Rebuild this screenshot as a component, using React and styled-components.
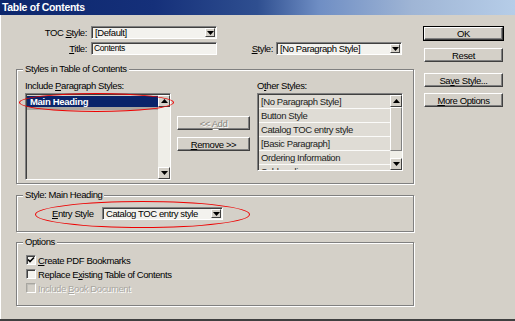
import React from "react";
import styled, { createGlobalStyle } from "styled-components";

const FONT = `"Liberation Sans", Arial, sans-serif`;

const GlobalStyle = createGlobalStyle`
  body {
    margin: 0;
    background: #d4d0c8;
  }
`;

const otherStyles = [
  "[No Paragraph Style]",
  "Button Style",
  "Catalog TOC entry style",
  "[Basic Paragraph]",
  "Ordering Information",
  "Subheading",
];

const Arrow = ({ up }) => (
  <svg width="7" height="4" viewBox="0 0 7 4">
    <path d={up ? "M0 4 L3.5 0 L7 4 Z" : "M0 0 L7 0 L3.5 4 Z"} fill="#000" />
  </svg>
);

const App = () => {
  return (
    <>
      <GlobalStyle />
      <Window>
        <TitleBar>Table of Contents</TitleBar>
        <Content>
          <MainCol>
            <FieldRow>
              <FieldLabel $w={75}>
                TOC <Key>S</Key>tyle:
              </FieldLabel>
              <Select $w={126}>
                <span>[Default]</span>
                <DropBtn>
                  <Arrow />
                </DropBtn>
              </Select>
            </FieldRow>
            <FieldRow $mt={3}>
              <FieldLabel $w={75}>
                <Key>T</Key>itle:
              </FieldLabel>
              <TextInput $w={126}>Contents</TextInput>
              <FieldLabel $w={27} $ml={32} $pr={3}>
                <Key>S</Key>tyle:
              </FieldLabel>
              <Select $w={126}>
                <span>[No Paragraph Style]</span>
                <DropBtn>
                  <Arrow />
                </DropBtn>
              </Select>
            </FieldRow>

            <Group $mt={14} $h={115}>
              <Legend>Styles in Table of Contents</Legend>
              <Ellipse $l={2} $t={23} $w={155} $h={19} />
              <GroupRow>
                <ListCol>
                  <ColLabel>
                    Include <Key>P</Key>aragraph Styles:
                  </ColLabel>
                  <ListBox $h={87}>
                    <ListItems>
                      <SelectedItem>Main Heading</SelectedItem>
                    </ListItems>
                    <ScrollBar>
                      <ScrollBtn>
                        <Arrow up />
                      </ScrollBtn>
                      <ScrollTrack />
                      <ScrollBtn>
                        <Arrow />
                      </ScrollBtn>
                    </ScrollBar>
                  </ListBox>
                </ListCol>
                <MidCol>
                  <Button $h={14} disabled>
                    &lt;&lt; <Key>A</Key>dd
                  </Button>
                  <Button $h={14} $mt={7}>
                    <Key>R</Key>emove &gt;&gt;
                  </Button>
                </MidCol>
                <ListCol $ml={7}>
                  <ColLabel>
                    O<Key>t</Key>her Styles:
                  </ColLabel>
                  <ListBox $h={78}>
                    <ListItems>
                      {otherStyles.map((s) => (
                        <ListItem key={s}>{s}</ListItem>
                      ))}
                    </ListItems>
                    <ScrollBar>
                      <ScrollBtn>
                        <Arrow up />
                      </ScrollBtn>
                      <ScrollThumb />
                      <ScrollTrack />
                      <ScrollBtn>
                        <Arrow />
                      </ScrollBtn>
                    </ScrollBar>
                  </ListBox>
                </ListCol>
              </GroupRow>
            </Group>

            <Group $mt={11} $h={37}>
              <Legend>Style: Main Heading</Legend>
              <Ellipse $l={18} $t={5} $w={215} $h={27} />
              <EntryRow>
                <EntryLabel>
                  <Key>E</Key>ntry Style
                </EntryLabel>
                <Select $w={121}>
                  <span>Catalog TOC entry style</span>
                  <DropBtn>
                    <Arrow />
                  </DropBtn>
                </Select>
              </EntryRow>
            </Group>

            <Group $mt={10} $h={64}>
              <Legend>Options</Legend>
              <Checks>
                <CheckRow>
                  <CheckBox>
                    <svg width="8" height="8" viewBox="0 0 8 8">
                      <path d="M1 3.5 L3 5.5 L7 1.5" stroke="#000" strokeWidth="1.6" fill="none" />
                    </svg>
                  </CheckBox>
                  <span>
                    <Key>C</Key>reate PDF Bookmarks
                  </span>
                </CheckRow>
                <CheckRow>
                  <CheckBox />
                  <span>
                    Replace E<Key>x</Key>isting Table of Contents
                  </span>
                </CheckRow>
                <CheckRow $disabled>
                  <CheckBox $disabled />
                  <span>
                    Include <Key>B</Key>ook Document
                  </span>
                </CheckRow>
              </Checks>
            </Group>
          </MainCol>

          <SideCol>
            <Button $h={13} $default>
              OK
            </Button>
            <Button $h={14} $mt={8}>
              Reset
            </Button>
            <Button $h={14} $mt={11}>
              Sa<Key>v</Key>e Style...
            </Button>
            <Button $h={14} $mt={6}>
              <Key>M</Key>ore Options
            </Button>
          </SideCol>
        </Content>
      </Window>
    </>
  );
};

const Window = styled.div`
  width: 515px;
  height: 321px;
  box-sizing: border-box;
  background: #d4d0c8;
  border-bottom: 2px solid #404040;
  font-family: ${FONT};
  font-size: 9.5px;
  letter-spacing: -0.4px;
  color: #000;
  display: flex;
  flex-direction: column;
  overflow: hidden;
`;

const TitleBar = styled.div`
  height: 15px;
  flex-shrink: 0;
  padding-left: 2px;
  line-height: 15px;
  font-weight: bold;
  font-size: 10.5px;
  letter-spacing: -0.3px;
  color: #fff;
  background: linear-gradient(
    90deg,
    #0c266c 0%,
    #15307a 30%,
    #2f4f90 50%,
    #6f8ec4 62%,
    #9fb5d5 80%,
    #b6cde8 100%
  );
`;

const Content = styled.div`
  flex: 1;
  display: flex;
  padding: 11px 0 0 15px;
  border-left: 1px solid #ffffff;
`;

const MainCol = styled.div`
  width: 398px;
  display: flex;
  flex-direction: column;
`;

const SideCol = styled.div`
  width: 79px;
  margin-left: 10px;
  padding-top: 1px;
  display: flex;
  flex-direction: column;
`;

const Key = styled.u`
  text-decoration: underline;
`;

const FieldRow = styled.div`
  display: flex;
  align-items: center;
  height: 13px;
  margin-top: ${(p) => p.$mt || 0}px;
`;

const FieldLabel = styled.span`
  width: ${(p) => p.$w}px;
  margin-left: ${(p) => p.$ml || 0}px;
  padding-right: ${(p) => (p.$pr != null ? p.$pr : 4)}px;
  box-sizing: border-box;
  text-align: right;
  white-space: nowrap;
`;

const Sunken = styled.div`
  width: ${(p) => p.$w}px;
  height: 13px;
  box-sizing: border-box;
  border: 1px solid;
  border-color: #808080 #ffffff #ffffff #808080;
  box-shadow: inset 1px 1px 0 #404040;
  background: #f3f2ee;
  display: flex;
  align-items: center;
  padding-left: 3px;
  white-space: nowrap;
  line-height: 11px;
`;

const Select = styled(Sunken)``;

const TextInput = styled(Sunken)`
  font-size: 8.5px;
  padding-left: 2px;
`;

const DropBtn = styled.div`
  margin-left: auto;
  margin-right: 1px;
  width: 10px;
  height: 9px;
  box-sizing: border-box;
  border: 1px solid;
  border-color: #ffffff #404040 #404040 #ffffff;
  background: #d4d0c8;
  display: flex;
  align-items: center;
  justify-content: center;
`;

const Group = styled.div`
  position: relative;
  box-sizing: border-box;
  height: ${(p) => p.$h}px;
  margin-top: ${(p) => p.$mt}px;
  border: 1px solid #808080;
  box-shadow: 1px 1px 0 #ffffff, inset 1px 1px 0 #ffffff;
`;

const Legend = styled.span`
  position: absolute;
  top: -7px;
  left: 6px;
  padding: 0 2px;
  line-height: 12px;
  background: #d4d0c8;
  white-space: nowrap;
`;

const Ellipse = styled.div`
  position: absolute;
  z-index: 2;
  left: ${(p) => p.$l}px;
  top: ${(p) => p.$t}px;
  width: ${(p) => p.$w}px;
  height: ${(p) => p.$h}px;
  box-sizing: border-box;
  border: 1.5px solid #ee0000;
  border-radius: 50%;
  pointer-events: none;
`;

const GroupRow = styled.div`
  display: flex;
  padding: 10px 0 0 8px;
`;

const ListCol = styled.div`
  width: 146px;
  margin-left: ${(p) => p.$ml || 0}px;
  display: flex;
  flex-direction: column;
`;

const ColLabel = styled.div`
  height: 12px;
  line-height: 12px;
  margin-bottom: 1px;
  white-space: nowrap;
`;

const ListBox = styled.div`
  height: ${(p) => p.$h}px;
  box-sizing: border-box;
  border: 1px solid;
  border-color: #808080 #ffffff #ffffff #808080;
  box-shadow: inset 1px 1px 0 #404040;
  padding: 1px 0 0 1px;
  background: #d4d0c8;
  display: flex;
`;

const ListItems = styled.div`
  flex: 1;
  overflow: hidden;
`;

const SelectedItem = styled.div`
  height: 11px;
  margin-top: 1px;
  padding-left: 3px;
  line-height: 11px;
  background: #0a246a;
  color: #fff;
  font-weight: bold;
  letter-spacing: -0.3px;
  border-bottom: 3px solid #a9a69f;
`;

const ListItem = styled.div`
  height: 13px;
  line-height: 13px;
  padding-left: 2px;
  background: #dfdcd5;
  border-bottom: 1px solid #fbfbf9;
  color: #1c1c1c;
  white-space: nowrap;
`;

const ScrollBar = styled.div`
  width: 12px;
  display: flex;
  flex-direction: column;
  background: #efeee8;
`;

const ScrollBtn = styled.div`
  height: 12px;
  box-sizing: border-box;
  border: 1px solid;
  border-color: #ffffff #404040 #404040 #ffffff;
  background: #d4d0c8;
  display: flex;
  align-items: center;
  justify-content: center;
`;

const ScrollThumb = styled.div`
  height: 44px;
  box-sizing: border-box;
  border: 1px solid;
  border-color: #ffffff #808080 #808080 #ffffff;
  background: #d4d0c8;
`;

const ScrollTrack = styled.div`
  flex: 1;
`;

const MidCol = styled.div`
  width: 73px;
  margin-left: 6px;
  padding-top: 36px;
  display: flex;
  flex-direction: column;
`;

const Button = styled.button`
  height: ${(p) => p.$h}px;
  margin-top: ${(p) => p.$mt || 0}px;
  width: 100%;
  box-sizing: border-box;
  padding: 0;
  font-family: ${FONT};
  font-size: 9.5px;
  letter-spacing: -0.4px;
  line-height: 11px;
  color: ${(p) => (p.disabled ? "#8a8882" : "#000")};
  text-shadow: ${(p) => (p.disabled ? "1px 1px 0 #fff" : "none")};
  background: #d4d0c8;
  border: 1px solid;
  border-color: #ffffff #404040 #404040 #ffffff;
  box-shadow: inset -1px -1px 0 #808080
    ${(p) => (p.$default ? ", 0 0 0 1px #000" : "")};
  text-align: center;
`;

const EntryRow = styled.div`
  display: flex;
  align-items: center;
  padding: 11px 0 0 35px;
`;

const EntryLabel = styled.span`
  width: 50px;
  white-space: nowrap;
`;

const Checks = styled.div`
  padding: 12px 0 0 9px;
  display: flex;
  flex-direction: column;
  gap: 4px;
`;

const CheckRow = styled.div`
  display: flex;
  align-items: center;
  height: 10px;
  gap: 2px;
  white-space: nowrap;
  color: ${(p) => (p.$disabled ? "#a8a6a0" : "#000")};
  text-shadow: ${(p) => (p.$disabled ? "1px 1px 0 #fff" : "none")};
`;

const CheckBox = styled.div`
  width: 10px;
  height: 10px;
  box-sizing: border-box;
  border: 1px solid;
  border-color: ${(p) =>
    p.$disabled ? "#a8a6a0 #fff #fff #a8a6a0" : "#808080 #ffffff #ffffff #808080"};
  box-shadow: inset 1px 1px 0 ${(p) => (p.$disabled ? "#c0beb8" : "#404040")};
  background: ${(p) => (p.$disabled ? "#d4d0c8" : "#f3f2ee")};
  display: flex;
  align-items: center;
  justify-content: center;
`;

export default App;
